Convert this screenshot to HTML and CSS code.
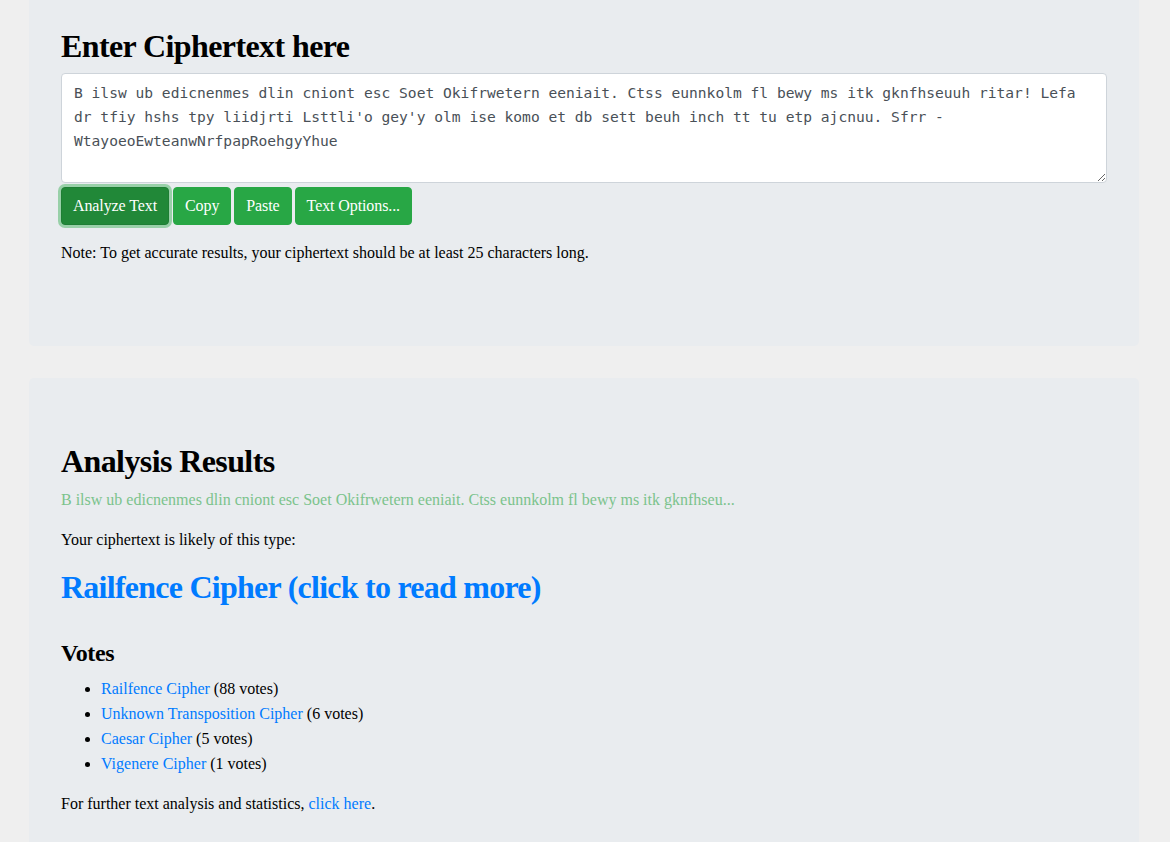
FILE: index.html
```html
<!DOCTYPE html>
<html lang="en">
<head>
<meta charset="utf-8">
<title>Cipher Identifier</title>
<link rel="stylesheet" href="styles.css">
</head>
<body>
<main class="page">
  <section class="panel panel-top">
    <h2 class="title">Enter Ciphertext here</h2>
    <textarea class="cipher-input" spellcheck="false">B ilsw ub edicnenmes dlin cniont esc Soet Okifrwetern eeniait. Ctss eunnkolm fl bewy ms itk gknfhseuuh ritar! Lefa dr tfiy hshs tpy liidjrti Lsttli'o gey'y olm ise komo et db sett beuh inch tt tu etp ajcnuu. Sfrr - WtayoeoEwteanwNrfpapRoehgyYhue</textarea>
    <div class="actions">
      <button class="btn btn-active">Analyze Text</button>
      <button class="btn">Copy</button>
      <button class="btn">Paste</button>
      <button class="btn">Text Options...</button>
    </div>
    <p class="text">Note: To get accurate results, your ciphertext should be at least 25 characters long.</p>
  </section>

  <section class="panel">
    <h2 class="title">Analysis Results</h2>
    <p class="text preview">B ilsw ub edicnenmes dlin cniont esc Soet Okifrwetern eeniait. Ctss eunnkolm fl bewy ms itk gknfhseu...</p>
    <p class="text">Your ciphertext is likely of this type:</p>
    <h2 class="title result"><a href="#">Railfence Cipher (click to read more)</a></h2>
    <h4 class="subtitle">Votes</h4>
    <ul class="votes">
      <li><a href="#">Railfence Cipher</a> (88 votes)</li>
      <li><a href="#">Unknown Transposition Cipher</a> (6 votes)</li>
      <li><a href="#">Caesar Cipher</a> (5 votes)</li>
      <li><a href="#">Vigenere Cipher</a> (1 votes)</li>
    </ul>
    <p class="text">For further text analysis and statistics, <a href="#">click here</a>.</p>
  </section>
</main>
</body>
</html>
```

FILE: styles.css
```css
html, body {
  margin: 0;
  padding: 0;
}
body {
  background: #efefef;
  font-family: "Liberation Serif", "Times New Roman", serif;
  font-size: 16px;
  line-height: 1.5;
  color: #000;
}
.page {
  width: 1110px;
  margin: 0 0 0 29px;
  display: flex;
  flex-direction: column;
  gap: 32px;
}
.panel {
  background: #e9ecef;
  border-radius: 5px;
  padding: 64px 32px;
}
.panel-top {
  padding-top: 27px;
  padding-bottom: 65px;
  border-top-left-radius: 0;
  border-top-right-radius: 0;
}
.title {
  margin: 0 0 8px;
  font-size: 32px;
  line-height: 38px;
  font-weight: 700;
  letter-spacing: -0.6px;
}
.cipher-input {
  display: block;
  box-sizing: border-box;
  width: 100%;
  height: 110px;
  margin: 0;
  padding: 7px 12px;
  border: 1px solid #ced4da;
  border-radius: 4px;
  background: #fff;
  color: #495057;
  font-family: "DejaVu Sans Mono", monospace;
  font-size: 14.6px;
  line-height: 24px;
  resize: vertical;
  outline: none;
}
.actions {
  display: flex;
  gap: 3px;
  margin-top: 4px;
  margin-bottom: 16px;
}
.btn {
  height: 38px;
  padding: 0 11px;
  border: 1px solid #28a745;
  border-radius: 4px;
  background: #28a745;
  color: #fff;
  font-family: "Liberation Serif", "Times New Roman", serif;
  font-size: 16px;
  letter-spacing: -0.1px;
  cursor: pointer;
}
.btn-active {
  background: #218838;
  border-color: #1e7e34;
  box-shadow: 0 0 0 3px rgba(72, 180, 97, 0.5);
  margin-right: 1px;
}
.text {
  margin: 0 0 16px;
}
.preview {
  color: #7bc38c;
}
a {
  color: #007bff;
  text-decoration: none;
}
.result {
  margin-bottom: 33px;
  letter-spacing: -0.75px;
}
.subtitle {
  margin: 0 0 8px;
  font-size: 24px;
  line-height: 29px;
  font-weight: 700;
  letter-spacing: -0.4px;
}
.votes {
  margin: 0 0 16px;
  padding-left: 40px;
  line-height: 25px;
}
```
